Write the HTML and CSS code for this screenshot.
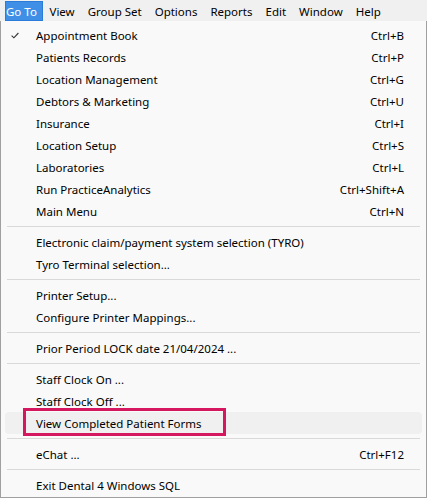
FILE: index.html
```html
<!DOCTYPE html>
<html>
<head>
<meta charset="utf-8">
<link rel="stylesheet" href="styles.css">
</head>
<body>
<div class="app">
  <div class="menubar">
    <span class="top-item active">Go To</span>
    <span class="top-item">View</span>
    <span class="top-item">Group Set</span>
    <span class="top-item">Options</span>
    <span class="top-item">Reports</span>
    <span class="top-item">Edit</span>
    <span class="top-item">Window</span>
    <span class="top-item">Help</span>
  </div>
  <div class="menu">
    <div class="item"><span class="check"><svg width="8" height="7" viewBox="0 0 8 7"><path d="M0.6 3.6 L2.9 5.8 L7.4 1" fill="none" stroke="#333" stroke-width="1.1"/></svg></span><span class="label">Appointment Book</span><span class="key">Ctrl+B</span></div>
    <div class="item"><span class="check"></span><span class="label">Patients Records</span><span class="key">Ctrl+P</span></div>
    <div class="item"><span class="check"></span><span class="label">Location Management</span><span class="key">Ctrl+G</span></div>
    <div class="item"><span class="check"></span><span class="label">Debtors &amp; Marketing</span><span class="key">Ctrl+U</span></div>
    <div class="item"><span class="check"></span><span class="label">Insurance</span><span class="key">Ctrl+I</span></div>
    <div class="item"><span class="check"></span><span class="label">Location Setup</span><span class="key">Ctrl+S</span></div>
    <div class="item"><span class="check"></span><span class="label">Laboratories</span><span class="key">Ctrl+L</span></div>
    <div class="item"><span class="check"></span><span class="label">Run PracticeAnalytics</span><span class="key">Ctrl+Shift+A</span></div>
    <div class="item"><span class="check"></span><span class="label">Main Menu</span><span class="key">Ctrl+N</span></div>
    <div class="sep"></div>
    <div class="item"><span class="check"></span><span class="label">Electronic claim/payment system selection (TYRO)</span><span class="key"></span></div>
    <div class="item"><span class="check"></span><span class="label">Tyro Terminal selection...</span><span class="key"></span></div>
    <div class="sep"></div>
    <div class="item"><span class="check"></span><span class="label">Printer Setup...</span><span class="key"></span></div>
    <div class="item"><span class="check"></span><span class="label">Configure Printer Mappings...</span><span class="key"></span></div>
    <div class="sep"></div>
    <div class="item"><span class="check"></span><span class="label">Prior Period LOCK date 21/04/2024 ...</span><span class="key"></span></div>
    <div class="sep"></div>
    <div class="item"><span class="check"></span><span class="label">Staff Clock On ...</span><span class="key"></span></div>
    <div class="item"><span class="check"></span><span class="label">Staff Clock Off ...</span><span class="key"></span></div>
    <div class="item hover"><span class="check"></span><span class="label">View Completed Patient Forms</span><span class="key"></span><span class="mark"></span></div>
    <div class="sep"></div>
    <div class="item"><span class="check"></span><span class="label">eChat ...</span><span class="key">Ctrl+F12</span></div>
    <div class="sep"></div>
    <div class="item"><span class="check"></span><span class="label">Exit Dental 4 Windows SQL</span><span class="key"></span></div>
  </div>
</div>
</body>
</html>
```
FILE: styles.css
```css
html, body {
  margin: 0;
  padding: 0;
  background: #f9f9f9;
}
.app {
  width: 427px;
  height: 498px;
  font-family: "Noto Sans", "Open Sans", sans-serif;
  font-size: 11.5px;
  color: #000;
  background: #f9f9f9;
}
.menubar {
  display: flex;
  height: 21px;
  background: #f0f0f0;
  padding-left: 5px;
  box-sizing: border-box;
  align-items: stretch;
}
.top-item {
  display: flex;
  align-items: center;
  padding: 0 5.5px 0 5.5px;
  margin-top: 1px;
  border: 1px solid transparent;
  box-sizing: border-box;
  white-space: nowrap;
}
.top-item.active {
  background: #3f8fe6;
  border-color: #2b7bd8;
  color: #fff;
  width: 38px;
  padding: 0 0 0 0;
}
.menu {
  height: 477px;
  box-sizing: border-box;
  border-left: 1px solid #a0a0a0;
  border-right: 1px solid #a0a0a0;
  border-bottom: 1px solid #a0a0a0;
  padding: 3px 4px 0 4px;
  background: #f9f9f9;
}
.item {
  position: relative;
  display: flex;
  align-items: center;
  height: 22px;
  border-radius: 4px;
}
.item.hover {
  background: #f0f0f0;
}
.check {
  width: 31px;
  display: flex;
  justify-content: flex-start;
  padding-left: 6px;
  box-sizing: border-box;
}
.check svg {
  display: block;
}
.label {
  flex: 1;
  white-space: nowrap;
}
.key {
  padding-right: 18px;
  white-space: nowrap;
}
.sep {
  height: 1px;
  background: #d9d9d9;
  margin: 4px 2px 4px 2px;
}
.mark {
  position: absolute;
  left: 18px;
  top: -4px;
  width: 203px;
  height: 28px;
  border: 3px solid #d5175f;
  box-sizing: border-box;
}
```
